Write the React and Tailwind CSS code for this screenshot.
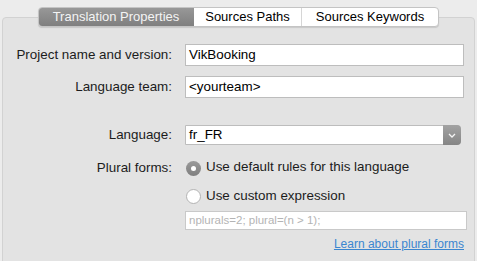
export default function App() {
  const font = { fontFamily: '"Liberation Sans", Arial, sans-serif' };
  return (
    <div className="w-[477px] h-[261px] bg-[#ececec] overflow-hidden text-[13.4px] text-[#1c1c1c]" style={font}>
      <div className="pt-[7px] flex justify-center relative z-10 text-[13px]">
        <div className="flex h-[20px] rounded-[4px] border border-[#c4c4c4] bg-white shadow-[0_1px_1px_rgba(0,0,0,0.12)] overflow-hidden">
          <div className="w-[156px] flex items-center justify-center bg-gradient-to-b from-[#999999] to-[#7e7e7e] text-[#f4f4f4] -my-px -ml-px rounded-l-[4px]">
            Translation Properties
          </div>
          <div className="w-[108px] flex items-center justify-center border-r border-[#d6d6d6] text-black">
            Sources Paths
          </div>
          <div className="w-[136px] flex items-center justify-center text-black">
            Sources Keywords
          </div>
        </div>
      </div>
      <div className="mx-[2px] -mt-[10px] h-[260px] bg-[#e3e3e3] border border-[#d2d2d2] rounded-[4px] pt-[26px]">
        <div className="flex items-center h-[22px]">
          <div className="w-[169px] text-right">Project name and version:</div>
          <div className="ml-[13px] w-[279px] h-[22px] bg-white border border-[#bdbdbd] flex items-center px-[3px] text-black">VikBooking</div>
        </div>
        <div className="flex items-center h-[22px] mt-[10px]">
          <div className="w-[169px] text-right">Language team:</div>
          <div className="ml-[13px] w-[279px] h-[22px] bg-white border border-[#bdbdbd] flex items-center px-[3px] text-black">&lt;yourteam&gt;</div>
        </div>
        <div className="flex items-center h-[20px] mt-[27px]">
          <div className="w-[169px] text-right">Language:</div>
          <div className="ml-[13px] w-[276px] h-[20px] bg-white border border-[#bdbdbd] rounded-r-[4px] flex items-stretch text-black">
            <div className="flex-1 flex items-center px-[3px]">fr_FR</div>
            <div className="w-[18px] -my-px -mr-px rounded-r-[4px] bg-gradient-to-b from-[#a3a3a3] to-[#858585] flex items-center justify-center">
              <svg width="8" height="5" viewBox="0 0 8 5"><path d="M1 1 L4 4 L7 1" fill="none" stroke="#f5f5f5" strokeWidth="1.3" /></svg>
            </div>
          </div>
        </div>
        <div className="flex items-center h-[18px] mt-[14px]">
          <div className="w-[169px] text-right">Plural forms:</div>
          <div className="ml-[14px] flex items-center">
            <div className="w-[15px] h-[15px] rounded-full bg-gradient-to-b from-[#9a9a9a] to-[#7f7f7f] flex items-center justify-center">
              <div className="w-[5px] h-[5px] rounded-full bg-white" />
            </div>
            <span className="ml-[5px] -mt-[2px]">Use default rules for this language</span>
          </div>
        </div>
        <div className="flex items-center h-[18px] mt-[10px]">
          <div className="w-[169px]" />
          <div className="ml-[14px] flex items-center">
            <div className="w-[15px] h-[15px] rounded-full bg-white border border-[#b3b3b3]" />
            <span className="ml-[5px]">Use custom expression</span>
          </div>
        </div>
        <div className="flex items-center h-[19px] mt-[6px]">
          <div className="w-[169px]" />
          <div className="ml-[13px] w-[282px] h-[19px] bg-white border border-[#c9c9c9] flex items-center px-[3px] text-[11.5px] text-[#b4b4b4]">nplurals=2; plural=(n &gt; 1);</div>
        </div>
        <div className="flex justify-end w-[461px] mt-[5px]">
          <span className="text-[12px] text-[#3b86d0] underline">Learn about plural forms</span>
        </div>
      </div>
    </div>
  );
}
